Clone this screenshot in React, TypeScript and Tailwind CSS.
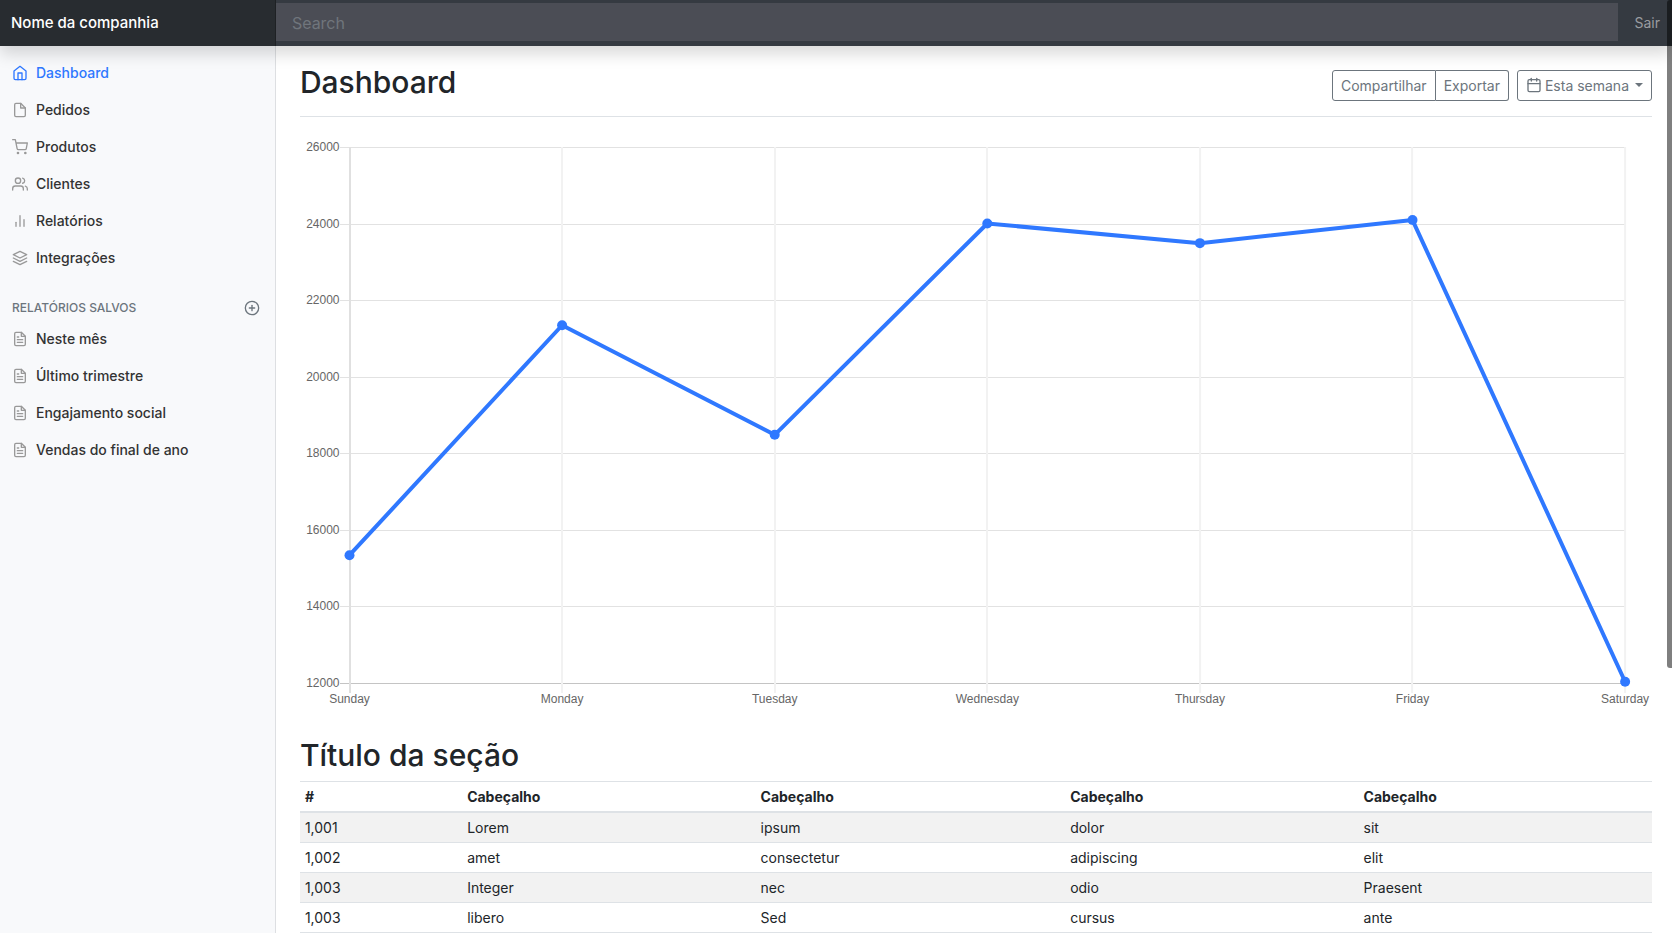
import React from "react";
import type { IconType } from "react-icons";
import {
  FiBarChart2,
  FiCalendar,
  FiFile,
  FiFileText,
  FiHome,
  FiLayers,
  FiPlusCircle,
  FiShoppingCart,
  FiUsers,
} from "react-icons/fi";

type NavEntry = { label: string; icon: IconType; active?: boolean };

const mainNav: NavEntry[] = [
  { label: "Dashboard", icon: FiHome, active: true },
  { label: "Pedidos", icon: FiFile },
  { label: "Produtos", icon: FiShoppingCart },
  { label: "Clientes", icon: FiUsers },
  { label: "Relatórios", icon: FiBarChart2 },
  { label: "Integrações", icon: FiLayers },
];

const savedReports: NavEntry[] = [
  { label: "Neste mês", icon: FiFileText },
  { label: "Último trimestre", icon: FiFileText },
  { label: "Engajamento social", icon: FiFileText },
  { label: "Vendas do final de ano", icon: FiFileText },
];

const sales = [
  { day: "Sunday", value: 15339 },
  { day: "Monday", value: 21345 },
  { day: "Tuesday", value: 18483 },
  { day: "Wednesday", value: 24003 },
  { day: "Thursday", value: 23489 },
  { day: "Friday", value: 24092 },
  { day: "Saturday", value: 12034 },
];

const columns = ["#", "Cabeçalho", "Cabeçalho", "Cabeçalho", "Cabeçalho"];

const rows = [
  ["1,001", "Lorem", "ipsum", "dolor", "sit"],
  ["1,002", "amet", "consectetur", "adipiscing", "elit"],
  ["1,003", "Integer", "nec", "odio", "Praesent"],
  ["1,003", "libero", "Sed", "cursus", "ante"],
];

function NavList({ items }: { items: NavEntry[] }) {
  return (
    <ul>
      {items.map(({ label, icon: Icon, active }) => (
        <li key={label}>
          <a
            href="#"
            aria-current={active ? "page" : undefined}
            className={
              active
                ? "flex items-center gap-2 px-3 py-2 text-sm/[21px] font-medium text-[#2f78ff]"
                : "flex items-center gap-2 px-3 py-2 text-sm/[21px] font-medium text-[#333333]"
            }
          >
            <Icon className={active ? "size-4" : "size-4 text-[#999999]"} aria-hidden="true" />
            {label}
          </a>
        </li>
      ))}
    </ul>
  );
}

const plot = { left: 49.5, right: 1325, top: 6, bottom: 542, min: 12000, max: 26000 };

function SalesChart() {
  const x = (i: number) => plot.left + ((plot.right - plot.left) * i) / (sales.length - 1);
  const y = (v: number) =>
    plot.bottom - ((v - plot.min) / (plot.max - plot.min)) * (plot.bottom - plot.top);
  const ticks = [26000, 24000, 22000, 20000, 18000, 16000, 14000, 12000];

  return (
    <svg
      viewBox="0 0 1352 571"
      className="my-6 block h-auto w-full font-['Liberation_Sans',sans-serif]"
      role="img"
      aria-label="Sunday – Saturday"
    >
      {ticks.map((t) => {
        const ty = Math.round(y(t)) + 0.5;
        return (
          <g key={t}>
            <line x1={40} x2={plot.right} y1={ty} y2={ty} stroke={t === plot.min ? "#c4c4c4" : "#e2e2e2"} />
            <text x={39.5} y={ty + 3.5} textAnchor="end" fontSize={12} fill="#666666">
              {t}
            </text>
          </g>
        );
      })}
      {sales.map((s, i) => (
        <g key={s.day}>
          <line
            x1={Math.round(x(i))}
            x2={Math.round(x(i))}
            y1={plot.top}
            y2={plot.bottom + 10}
            strokeWidth={2}
            stroke={i === 0 ? "#e0e0e0" : "#f2f2f2"}
          />
          <text x={x(i)} y={562} textAnchor="middle" fontSize={12} fill="#666666">
            {s.day}
          </text>
        </g>
      ))}
      <polyline
        points={sales.map((s, i) => `${x(i)},${y(s.value)}`).join(" ")}
        fill="none"
        stroke="#2f78ff"
        strokeWidth={4}
        strokeLinejoin="round"
      />
      {sales.map((s, i) => (
        <circle key={s.day} cx={x(i)} cy={y(s.value)} r={5} fill="#2f78ff" />
      ))}
    </svg>
  );
}

export default function App() {
  return (
    <div className="relative flex min-h-screen flex-col bg-white font-[Inter,sans-serif] text-[#212529]">
      <header className="relative z-10 flex h-[46px] items-stretch bg-[#353a41] shadow-[0_8px_16px_rgba(0,0,0,0.15)]">
        <a
          href="#"
          className="flex w-[16.5%] shrink-0 items-center bg-[#282c30] px-[11px] text-[15px] font-medium text-white shadow-[inset_-1px_0_0_rgba(0,0,0,0.25)]"
        >
          Nome da companhia
        </a>
        <input
          type="text"
          placeholder="Search"
          aria-label="Search"
          className="mt-[3px] mb-[5px] min-w-0 flex-1 bg-[#4b4d55] px-4 pt-[2px] text-base text-white outline-none placeholder:text-[#70757c]"
        />
        <a href="#" className="flex items-center pr-3 pl-4 text-sm text-[#9a9ca0]">
          Sair
        </a>
      </header>

      <div className="flex flex-1">
        <nav className="w-[16.5%] shrink-0 border-r border-[#dddfe2] bg-[#f8f9fb] pt-2">
          <NavList items={mainNav} />
          <div className="mt-6 mb-1 flex items-center justify-between pr-[15px] pl-3 text-[#6c757d]">
            <h6 className="text-xs font-medium uppercase">Relatórios salvos</h6>
            <button type="button" aria-label="Relatórios salvos">
              <FiPlusCircle className="size-4" />
            </button>
          </div>
          <NavList items={savedReports} />
        </nav>

        <main className="min-w-0 flex-1 pr-5 pl-6">
          <div className="flex items-center justify-between border-b border-[#dee2e6] pt-4 pb-2">
            <h1 className="mb-[6px] text-[30px] leading-[40px] font-medium">Dashboard</h1>
            <div className="flex gap-2 text-sm/[21px] text-[#6c757d]">
              <div className="flex">
                <button type="button" className="rounded-l-[3px] border border-[#6c757d] px-2 py-1">
                  Compartilhar
                </button>
                <button type="button" className="rounded-r-[3px] border border-l-0 border-[#6c757d] px-2 py-1">
                  Exportar
                </button>
              </div>
              <button
                type="button"
                className="flex items-center gap-[3px] rounded-[3px] border border-[#6c757d] px-2 py-1"
              >
                <FiCalendar className="size-4" aria-hidden="true" />
                Esta semana
                <span className="ml-[3px] border-x-4 border-t-4 border-x-transparent border-t-current" />
              </button>
            </div>
          </div>

          <SalesChart />

          <h2 className="mb-[7px] text-[30px] leading-[38px] font-medium">Título da seção</h2>
          <table className="w-full table-fixed border-collapse text-left text-sm/[21px]">
            <colgroup>
              <col className="w-[12%]" />
              <col className="w-[21.7%]" />
              <col className="w-[22.9%]" />
              <col className="w-[21.7%]" />
              <col className="w-[21.7%]" />
            </colgroup>
            <thead>
              <tr className="border-t border-b-2 border-[#dee2e6]">
                {columns.map((c, i) => (
                  <th key={i} scope="col" className="px-[5px] py-1 font-bold">
                    {c}
                  </th>
                ))}
              </tr>
            </thead>
            <tbody>
              {rows.map((row, r) => (
                <tr key={r} className="border-b border-[#dee2e6] odd:bg-[#f2f2f2]">
                  {row.map((cell, c) => (
                    <td key={c} className="px-[5px] py-1">
                      {cell}
                    </td>
                  ))}
                </tr>
              ))}
            </tbody>
          </table>
        </main>
      </div>

      <div
        aria-hidden="true"
        className="absolute top-0 right-0 z-20 h-[668px] w-[5px] rounded-l-[3px] bg-black/50"
      />
    </div>
  );
}
